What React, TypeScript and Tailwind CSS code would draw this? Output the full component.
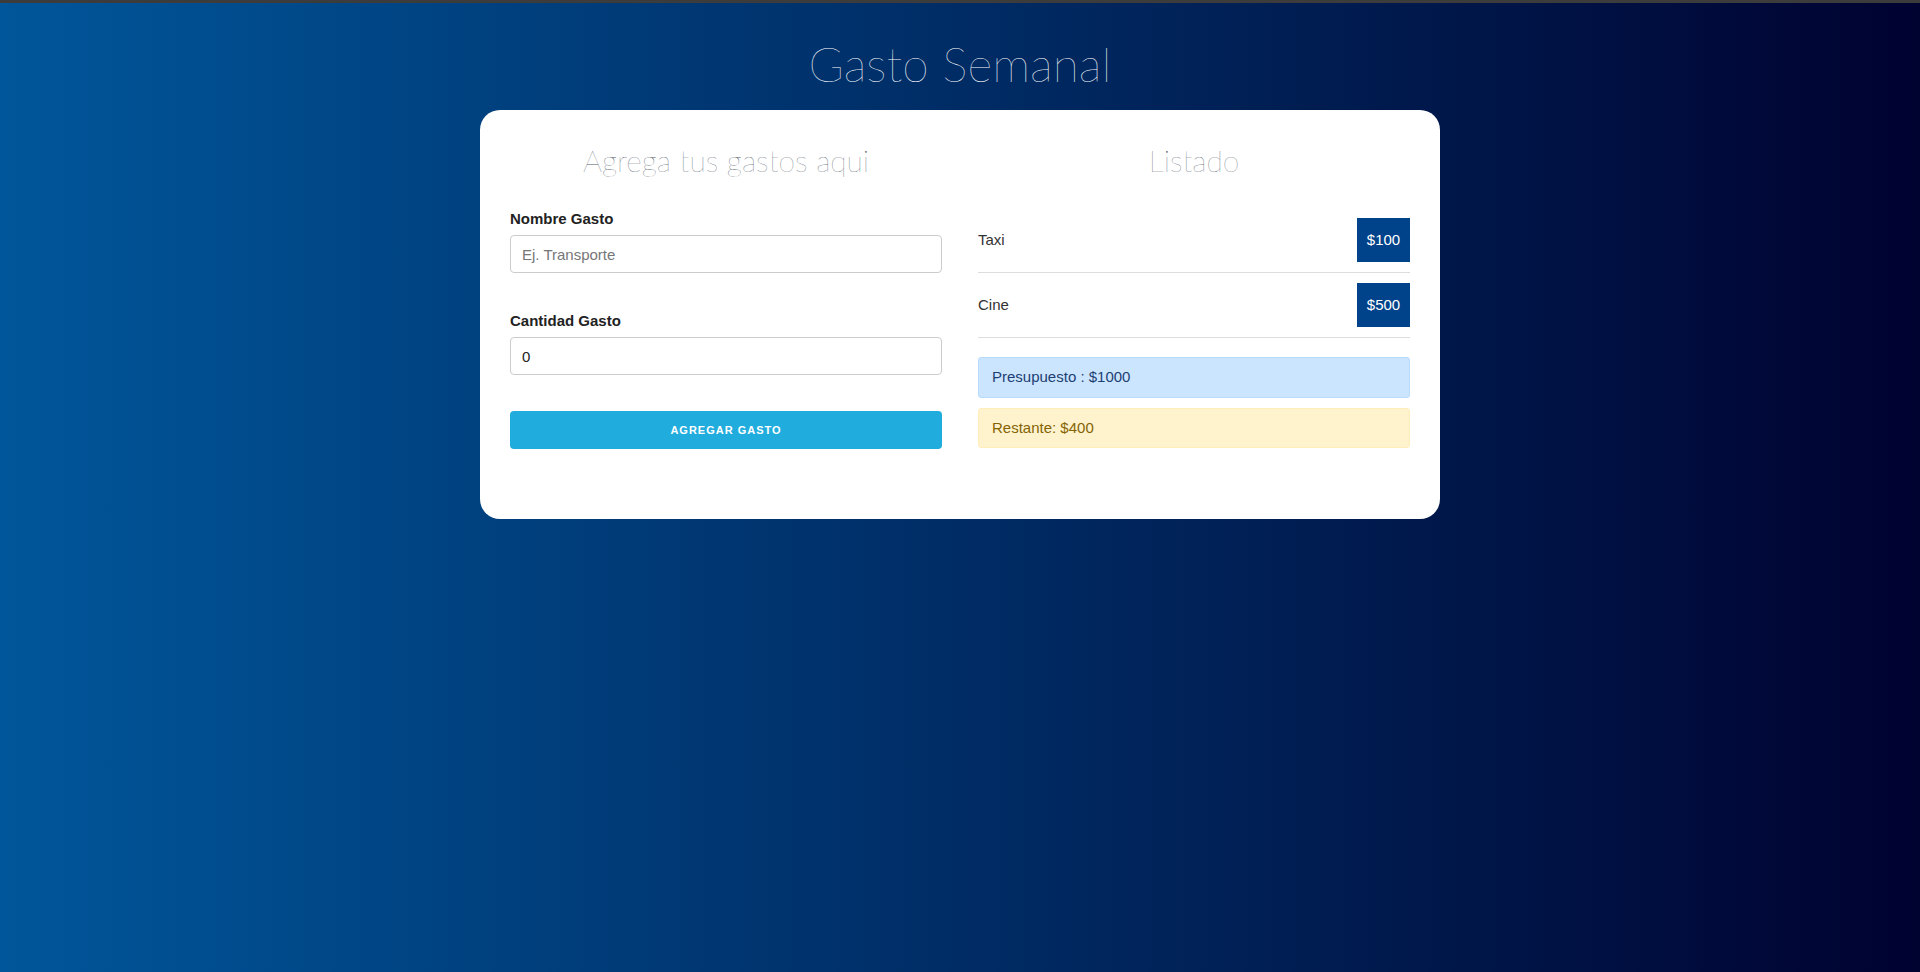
import { useState } from 'react';

interface Gasto {
  id: number;
  nombre: string;
  cantidad: number;
}

const gastos: Gasto[] = [
  { id: 1, nombre: 'Taxi', cantidad: 100 },
  { id: 2, nombre: 'Cine', cantidad: 500 },
];

const App = () => {
  const [nombre, setNombre] = useState('');
  const [cantidad, setCantidad] = useState('0');

  return (
    <div className="min-h-screen bg-[linear-gradient(to_right,#00569a,#000230)] font-['Liberation_Sans',Arial,sans-serif]">
      <div className="h-[3px] bg-[#3c3c3c]" />
      <header className="pt-[27px] pb-[13px] text-center">
        <h1 className="font-['Lato',sans-serif] font-thin text-[48px] leading-[67px] text-white">Gasto Semanal</h1>
      </header>

      <main className="mx-auto w-[960px] rounded-[20px] bg-white px-[30px] pt-[31px] pb-[70px]">
        <div className="grid grid-cols-2 gap-[36px]">
          <div>
            <h2 className="text-center font-['Lato',sans-serif] font-thin text-[30px] leading-[38px] text-[#4f5a68]">
              Agrega tus gastos aqui
            </h2>
            <form className="mt-[29px]" onSubmit={(e) => e.preventDefault()}>
              <label className="block text-[15px] font-bold leading-[22px] text-[#222]">Nombre Gasto</label>
              <input
                type="text"
                value={nombre}
                onChange={(e) => setNombre(e.target.value)}
                placeholder="Ej. Transporte"
                className="mt-[5px] block h-[38px] w-full rounded-[4px] border border-[#ccc] px-[11px] text-[15px] text-[#333] placeholder-[#777] outline-none"
              />
              <label className="mt-[37px] block text-[15px] font-bold leading-[22px] text-[#222]">Cantidad Gasto</label>
              <input
                type="number"
                value={cantidad}
                onChange={(e) => setCantidad(e.target.value)}
                className="mt-[5px] block h-[38px] w-full rounded-[4px] border border-[#ccc] px-[11px] text-[15px] text-[#222] outline-none"
              />
              <button
                type="submit"
                className="mt-[36px] block h-[38px] w-full rounded-[4px] bg-[#20acdd] text-[11px] font-bold tracking-[1px] text-white"
              >
                AGREGAR GASTO
              </button>
            </form>
          </div>

          <div>
            <h2 className="text-center font-['Lato',sans-serif] font-thin text-[30px] leading-[38px] text-[#4f5a68]">Listado</h2>
            <ul className="mt-[29px]">
              {gastos.map((g) => (
                <li key={g.id} className="flex items-center justify-between border-b border-[#ddd] py-[10px]">
                  <span className="text-[15px] text-[#333]">{g.nombre}</span>
                  <span className="flex h-[44px] w-[53px] items-center justify-center bg-[#01438a] text-[15px] text-white">
                    ${g.cantidad}
                  </span>
                </li>
              ))}
            </ul>
            <div className="mt-[19px] flex h-[41px] items-center rounded-[3px] border border-[#b8daff] bg-[#cce5ff] px-[13px] text-[15px] text-[#1c3f73]">
              Presupuesto : $1000
            </div>
            <div className="mt-[10px] flex h-[40px] items-center rounded-[3px] border border-[#ffeeba] bg-[#fff3cd] px-[13px] text-[15px] text-[#856404]">
              Restante: $400
            </div>
          </div>
        </div>
      </main>
    </div>
  );
};

export default App;
